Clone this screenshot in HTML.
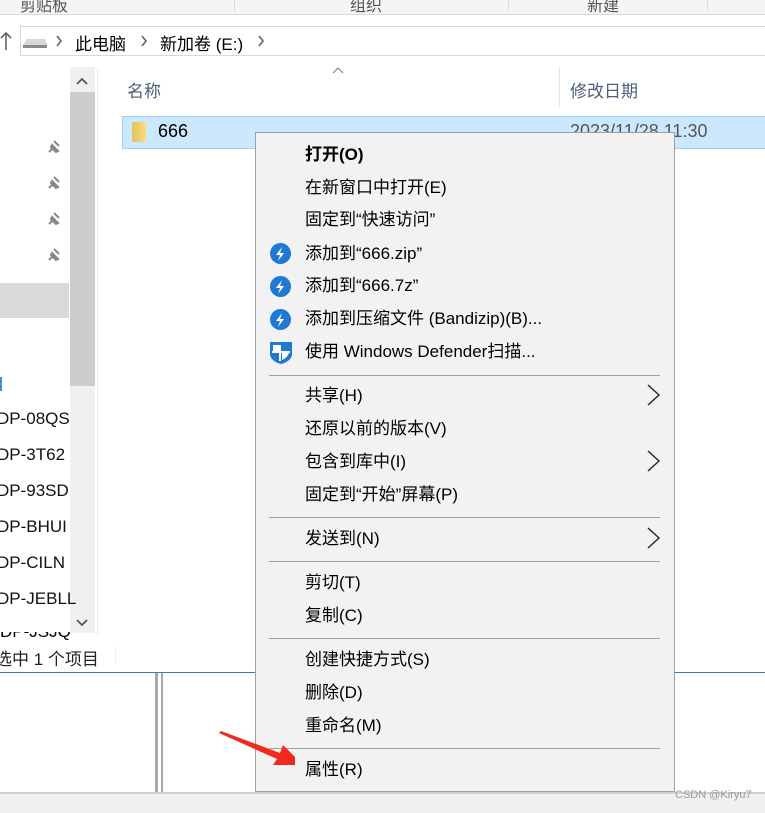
<!DOCTYPE html><html><head><meta charset="utf-8"><style>
*{margin:0;padding:0;box-sizing:border-box}
body{width:765px;height:813px;overflow:hidden;background:#fff;position:relative;font-family:"Liberation Sans","Microsoft YaHei","Noto Sans CJK SC",sans-serif;color:#000}
.a{position:absolute;white-space:nowrap}
.mi{position:absolute;left:305px;font-size:17px;line-height:20px}
.sep{position:absolute;left:269px;width:391px;height:1px;background:#a0a0a0}
.ic{position:absolute;left:270px;width:21px;height:21px;border-radius:50%;background:#1e78d4}
.nav{position:absolute;left:-3px;font-size:17px;color:#111}
</style></head><body>
<div class="a" style="left:0;top:0;width:765px;height:15px;background:#f5f5f5;border-bottom:1px solid #dadada"></div>
<div class="a" style="left:20px;top:-8px;font-size:16px;color:#555">剪贴板</div>
<div class="a" style="left:350px;top:-8px;font-size:16px;color:#555">组织</div>
<div class="a" style="left:587px;top:-8px;font-size:16px;color:#555">新建</div>
<div class="a" style="left:234px;top:0;width:1px;height:12px;background:#ddd"></div>
<div class="a" style="left:508px;top:0;width:1px;height:12px;background:#ddd"></div>
<div class="a" style="left:707px;top:0;width:1px;height:12px;background:#ddd"></div>
<svg class="a" style="left:0;top:30px" width="12" height="22"><path d="M6 20V3M1 8l5-5 5 5" stroke="#666" stroke-width="1.6" fill="none"/></svg>
<div class="a" style="left:20px;top:26px;width:760px;height:30px;border:1px solid #d9d9d9;border-right:none"></div>
<svg class="a" style="left:22px;top:36px" width="26" height="14"><path d="M5 3h18l2 6H1z" fill="#d8d8d8"/><path d="M1 9h24v3H1z" fill="#8a8a8a"/></svg>
<svg class="a" style="left:0;top:0" width="280" height="60"><g stroke="#666" stroke-width="1.6" fill="none"><path d="M57 36l4 5-4 5M142 36l4 5-4 5M259 36l4 5-4 5"/></g></svg>
<div class="a" style="left:75px;top:30px;font-size:17px">此电脑</div>
<div class="a" style="left:160px;top:30px;font-size:17px">新加卷 (E:)</div>
<!-- nav pane -->
<div class="a" style="left:0;top:283px;width:69px;height:35px;background:#d9d9d9"></div>
<div class="a" style="left:70px;top:67px;width:25px;height:566px;background:#f0f0f0"></div>
<div class="a" style="left:70px;top:92px;width:25px;height:294px;background:#cdcdcd"></div>
<svg class="a" style="left:70px;top:67px" width="25" height="566"><g stroke="#555" stroke-width="1.8" fill="none"><path d="M77 0" /><path d="M7 17l5-5 5 5M7 553l5 5 5-5"/></g></svg>
<div class="a" style="left:97px;top:67px;width:1px;height:570px;background:#eee"></div>
<div class="a" style="left:0;top:377px;width:2px;height:14px;background:#3c8fd8"></div>
<div class="nav" style="top:409px">DP-08QS</div>
<div class="nav" style="top:445px">DP-3T62</div>
<div class="nav" style="top:481px">DP-93SD</div>
<div class="nav" style="top:517px">DP-BHUI</div>
<div class="nav" style="top:553px">DP-CILN</div>
<div class="nav" style="top:589px">DP-JEBLL</div>
<div class="a" style="left:0;top:632px;width:70px;height:8px;overflow:hidden"><div style="font-size:17px;margin-top:-10px">DP-JSJQ</div></div>
<svg class="a" style="left:0;top:0" width="70" height="270"><g fill="#888" stroke="#888" stroke-width="2"><path d="M52 145l6 6-2 1-5-5zM54 141l5 5M49 152l3-3"/><path d="M52 181l6 6-2 1-5-5zM54 177l5 5M49 188l3-3"/><path d="M52 217l6 6-2 1-5-5zM54 213l5 5M49 224l3-3"/><path d="M52 253l6 6-2 1-5-5zM54 249l5 5M49 260l3-3"/></g></svg>
<!-- header -->
<div class="a" style="left:127px;top:77px;font-size:17px;color:#4c607a">名称</div>
<svg class="a" style="left:332px;top:67px" width="12" height="8"><path d="M1 6l5-5 5 5" stroke="#777" fill="none"/></svg>
<div class="a" style="left:559px;top:67px;width:1px;height:40px;background:#e5e5e5"></div>
<div class="a" style="left:570px;top:77px;font-size:17px;color:#4c607a">修改日期</div>
<div class="a" style="left:122px;top:116px;width:650px;height:33px;background:#cce8ff;border:1px solid #99d1ff"></div>
<div class="a" style="left:132px;top:122px;width:14px;height:20px;background:linear-gradient(90deg,#e6c25a,#f8dc80);border-radius:1px"></div>
<div class="a" style="left:158px;top:121px;font-size:18px">666</div>
<div class="a" style="left:570px;top:121px;font-size:18px;color:#555">2023/11/28 11:30</div>
<!-- status -->
<div class="a" style="left:-5px;top:645px;font-size:17px;color:#222">选中 1 个项目</div>
<div class="a" style="left:115px;top:646px;width:1px;height:18px;background:#eee"></div>
<div class="a" style="left:0;top:672px;width:765px;height:1px;background:#3a78b0"></div>
<div class="a" style="left:155px;top:673px;width:3px;height:120px;background:#a8a8a8"></div>
<div class="a" style="left:161px;top:673px;width:2px;height:120px;background:#a8a8a8"></div>
<div class="a" style="left:0;top:792px;width:765px;height:21px;background:#f0f0f0;border-top:2px solid #d0d0d0"></div>
<div class="a" style="left:675px;top:789px;font-size:11px;color:#999">CSDN @Kiryu7</div>
<!-- menu -->
<div class="a" style="left:255px;top:132px;width:420px;height:660px;background:#f2f2f2;border:1px solid #a0a0a0"></div>
<div class="mi" style="top:145px;font-weight:bold">打开(O)</div>
<div class="mi" style="top:178px">在新窗口中打开(E)</div>
<div class="mi" style="top:210px">固定到“快速访问”</div>
<div class="ic" style="top:243px"></div><div class="ic" style="top:276px"></div><div class="ic" style="top:309px"></div>
<svg class="a" style="left:270px;top:243px" width="21" height="90"><g fill="#fff"><path d="M12 4l-6 8h4l-2 6 6-8h-4z"/><path d="M12 37l-6 8h4l-2 6 6-8h-4z"/><path d="M12 70l-6 8h4l-2 6 6-8h-4z"/></g></svg>
<div class="mi" style="top:244px">添加到“666.zip”</div>
<div class="mi" style="top:276px">添加到“666.7z”</div>
<div class="mi" style="top:309px">添加到压缩文件 (Bandizip)(B)...</div>
<svg class="a" style="left:269px;top:340px" width="24" height="25"><path d="M1 2h22v12c0 5-6 9-11 10C7 23 1 19 1 14z" fill="#1e78d4"/><path d="M11 5v16M3 12h18" stroke="#fff" stroke-width="2"/><path d="M4 5h6v6H4zM13 13h7c-1 3-4 6-7 7z" fill="#fff"/></svg>
<div class="mi" style="top:342px">使用 Windows Defender扫描...</div>
<div class="sep" style="top:375px"></div>
<div class="mi" style="top:386px">共享(H)</div>
<div class="mi" style="top:419px">还原以前的版本(V)</div>
<div class="mi" style="top:452px">包含到库中(I)</div>
<div class="mi" style="top:485px">固定到“开始”屏幕(P)</div>
<div class="sep" style="top:517px"></div>
<div class="mi" style="top:529px">发送到(N)</div>
<div class="sep" style="top:561px"></div>
<div class="mi" style="top:573px">剪切(T)</div>
<div class="mi" style="top:606px">复制(C)</div>
<div class="sep" style="top:638px"></div>
<div class="mi" style="top:650px">创建快捷方式(S)</div>
<div class="mi" style="top:683px">删除(D)</div>
<div class="mi" style="top:716px">重命名(M)</div>
<div class="sep" style="top:748px"></div>
<div class="mi" style="top:760px">属性(R)</div>
<svg class="a" style="left:645px;top:380px" width="20" height="175" fill="none" stroke="#222" stroke-width="1.4"><path d="M3 5l11 10L3 25M3 71l11 10L3 91M3 148l11 10L3 168"/></svg>
<svg class="a" style="left:215px;top:728px" width="80" height="40"><path d="M4 5l58 26-4 6 30 0-20-20-3 8L6 3z" fill="#f02a1e"/></svg>
</body></html>
